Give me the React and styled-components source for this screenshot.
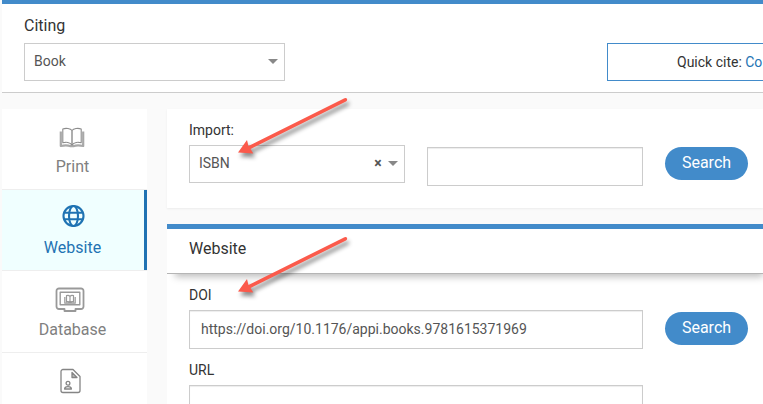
import React, { useState } from "react";
import styled, { createGlobalStyle, ThemeProvider } from "styled-components";

const theme = {
  page: "#fafafa",
  blue: "#428bca",
  active: "#1f73b3",
  activeBg: "#f0ffff",
  border: "#cccccc",
  text: "#333333",
  muted: "#808080",
};

const PrintIcon = () => (
  <Icon width="28" height="24" viewBox="1 -2 28 24" aria-hidden="true">
    <g fill="none" strokeLinejoin="round">
      <path
        stroke="#a8a8a8"
        strokeWidth="2.200"
        d="M2.800 4.500V19c3.500-.8 7.200-.8 9.800.2h2.800c2.600-1 6.300-1 9.800-.2V4.500"
      />
      <path
        fill="#fff"
        stroke="#8c8c8c"
        strokeWidth="1.100"
        d="M14 3.500C12.500 1.500 8 .7 4.800 2v13.800c3-1 7.200-.6 9.200 2.200 2-2.800 6.200-3.200 9.200-2.200V2C20 .7 15.500 1.500 14 3.500z"
      />
      <path stroke="#8c8c8c" strokeWidth="1.400" d="M14 3.500V18" />
    </g>
  </Icon>
);

const WebsiteIcon = () => (
  <Icon width="28" height="24" viewBox="0 0 28 24" aria-hidden="true">
    <g fill="none" stroke="#1f73b3" strokeWidth="2.100">
      <circle cx="14.500" cy="10" r="10" />
      <ellipse cx="14.500" cy="10" rx="4.500" ry="10" />
      <path d="M5.200 6.800h18.600M5.200 13.200h18.600" />
    </g>
  </Icon>
);

const DatabaseIcon = () => (
  <Icon width="30" height="25" viewBox="3 0 30 25" aria-hidden="true">
    <g fill="none" stroke="#999999" strokeWidth="1.800" strokeLinejoin="round">
      <path d="M4 1.500h22A2.500 2.500 0 0 1 28.500 4v15.500A2.500 2.500 0 0 1 26 22h-5.500v2h-11v-2H4a2.500 2.500 0 0 1-2.500-2.500V4A2.500 2.500 0 0 1 4 1.500z" />
      <path strokeWidth="1.400" d="M5.200 5.200h19.600v12.600H5.200z" />
      <path
        strokeWidth="1.200"
        d="M15 9.500c-.8-1.200-2.200-1.400-3.500-.9v6.200c1.300-.4 2.700-.2 3.500 1 .8-1.200 2.200-1.400 3.500-1V8.600c-1.300-.5-2.700-.3-3.500.9zV16M9.800 10v6.200h10.400V10"
      />
    </g>
  </Icon>
);

const PersonalIcon = () => (
  <Icon width="24" height="24" viewBox="3 1 24 24" aria-hidden="true">
    <g fill="none" stroke="#858585" strokeWidth="1.300" strokeLinejoin="round">
      <path d="M5 1.500h10L22 8.500v14a2 2 0 0 1-2 2H5a2 2 0 0 1-2-2v-19a2 2 0 0 1 2-2z" />
      <path fill="#bbbbbb" d="M14 4.500v5h5z" />
      <circle cx="10" cy="15.200" r="1.900" />
      <path d="M6.600 21c0-3.300 6.800-3.300 6.800 0z" />
    </g>
  </Icon>
);

const Arrow = ({ top }) => (
  <ArrowSvg $top={top} viewBox="0 0 118 68" aria-hidden="true">
    <path
      fill="#fb5a4b"
      d="M3 56.500L12 44l1.500 6L109.500 2.200q2-.8 2.500.8.500 1.500-1 2.500L15.500 53l2.800 4.500z"
    />
  </ArrowSvg>
);

const CATEGORIES = [
  { id: "print", label: "Print", icon: PrintIcon },
  { id: "website", label: "Website", icon: WebsiteIcon },
  { id: "database", label: "Database", icon: DatabaseIcon },
  { id: "personal", label: "", icon: PersonalIcon },
];

const App = () => {
  const [category, setCategory] = useState("website");
  const [citing, setCiting] = useState("book");
  const [source, setSource] = useState("isbn");
  const [query, setQuery] = useState("");
  const [doi, setDoi] = useState(
    "https://doi.org/10.1176/appi.books.9781615371969"
  );
  const [url, setUrl] = useState("");

  return (
    <ThemeProvider theme={theme}>
      <GlobalStyle />
      <Page>
        <TopBar>
          <CitingField>
            <CitingLabel htmlFor="citing">Citing</CitingLabel>
            <SelectBox>
              <Select
                id="citing"
                value={citing}
                onChange={(e) => setCiting(e.target.value)}
              >
                <option value="book">Book</option>
              </Select>
            </SelectBox>
          </CitingField>
          <QuickCite>
            Quick cite: <QuickLink href="#quick">Co</QuickLink>
          </QuickCite>
        </TopBar>

        <Content>
          <Sidebar>
            {CATEGORIES.map(({ id, label, icon: CategoryIcon }) => (
              <SidebarItem
                key={id}
                type="button"
                aria-label={label || id}
                $active={category === id}
                onClick={() => setCategory(id)}
              >
                <CategoryIcon />
                {label}
              </SidebarItem>
            ))}
          </Sidebar>

          <Main>
            <ImportPanel>
              <Label htmlFor="source">Import:</Label>
              <FieldRow>
                <SelectBox>
                  <Select
                    id="source"
                    value={source}
                    onChange={(e) => setSource(e.target.value)}
                  >
                    <option value=""></option>
                    <option value="isbn">ISBN</option>
                  </Select>
                  <ClearButton
                    type="button"
                    aria-label="Clear"
                    onClick={() => setSource("")}
                  >
                    ×
                  </ClearButton>
                </SelectBox>
                <Lowered>
                  <Input
                    aria-label="Import query"
                    value={query}
                    onChange={(e) => setQuery(e.target.value)}
                  />
                </Lowered>
                <Lowered>
                  <SearchButton type="button">Search</SearchButton>
                </Lowered>
              </FieldRow>
              <Arrow top={-13} />
            </ImportPanel>

            <FormPanel>
              <PanelTitle>Website</PanelTitle>
              <FormBody>
                <Label htmlFor="doi">DOI</Label>
                <FieldRow>
                  <WideCell>
                    <Input
                      id="doi"
                      value={doi}
                      onChange={(e) => setDoi(e.target.value)}
                    />
                  </WideCell>
                  <Lowered>
                    <SearchButton type="button">Search</SearchButton>
                  </Lowered>
                </FieldRow>
                <Label htmlFor="url">URL</Label>
                <FieldRow>
                  <WideCell>
                    <Input
                      id="url"
                      value={url}
                      onChange={(e) => setUrl(e.target.value)}
                    />
                  </WideCell>
                </FieldRow>
              </FormBody>
              <Arrow top={6} />
            </FormPanel>
          </Main>
        </Content>
      </Page>
    </ThemeProvider>
  );
};

export default App;

const GlobalStyle = createGlobalStyle`
  * {
    box-sizing: border-box;
  }

  body {
    margin: 0;
    background: ${theme.page};
    color: ${theme.text};
    font-family: Roboto, sans-serif;
    font-size: 14px;
    line-height: 20px;
  }

  button, input, select {
    font: inherit;
  }
`;

const Page = styled.div`
  height: 100vh;
  overflow: hidden;
  padding-left: 2px;
`;

const TopBar = styled.header`
  display: flex;
  align-items: flex-end;
  justify-content: space-between;
  padding: 12px 0 11px 22px;
  background: #fff;
  border-top: 4px solid ${({ theme }) => theme.blue};
  border-bottom: 1px solid ${({ theme }) => theme.border};
`;

const CitingField = styled.div`
  width: 261px;
`;

const CitingLabel = styled.label`
  display: block;
  margin-bottom: 7px;
  font-size: 16px;
`;

const SelectBox = styled.div`
  position: relative;

  &::after {
    content: "";
    position: absolute;
    top: 16px;
    right: 7px;
    border: 5px solid transparent;
    border-top-color: #888;
    border-bottom: 0;
    pointer-events: none;
  }
`;

const Select = styled.select`
  display: block;
  width: 100%;
  height: 38px;
  padding: 0 44px 2px 9px;
  appearance: none;
  color: #555;
  background: #fff;
  border: 1px solid ${({ theme }) => theme.border};
  border-radius: 0;
`;

const ClearButton = styled.button`
  position: absolute;
  top: 8px;
  right: 22px;
  padding: 0;
  width: 10px;
  line-height: 20px;
  font-weight: 700;
  color: #555;
  background: none;
  border: 0;
`;

const QuickCite = styled.div`
  width: 156px;
  height: 38px;
  padding: 8px 0 8px 69px;
  overflow: hidden;
  white-space: nowrap;
  border: 1px solid ${({ theme }) => theme.blue};
  border-right: 0;
`;

const QuickLink = styled.a`
  color: ${({ theme }) => theme.active};
  text-decoration: none;
`;

const Content = styled.div`
  display: flex;
  align-items: flex-start;
  gap: 20px;
  padding-top: 16px;
`;

const Sidebar = styled.nav`
  flex: 0 0 145px;
`;

const SidebarItem = styled.button`
  display: flex;
  flex-direction: column;
  align-items: center;
  gap: 6px;
  width: 100%;
  min-height: 81px;
  padding: 16px 4px 10px 0;
  font-size: 16px;
  line-height: 24px;
  color: ${({ theme, $active }) => ($active ? theme.active : theme.muted)};
  background: ${({ theme, $active }) => ($active ? theme.activeBg : "#fff")};
  border: 0;
  border-bottom: 1px solid #eee;
  box-shadow: ${({ theme, $active }) =>
    $active ? `inset -3px 0 0 ${theme.active}` : "none"};
`;

const Icon = styled.svg`
  flex: none;
  overflow: visible;
`;

const Main = styled.main`
  flex: 1;
  min-width: 0;
`;

const ImportPanel = styled.section`
  position: relative;
  padding: 11px 15px 13px 22px;
  background: #fff;
  box-shadow: 0 1px 2px rgba(0, 0, 0, 0.06);
`;

const Label = styled.label`
  display: block;
  margin-bottom: 5px;
`;

const FieldRow = styled.div`
  display: grid;
  grid-template-columns: 1fr 1fr 83px;
  column-gap: 22px;
  min-height: 50px;
`;

const Lowered = styled.div`
  padding-top: 2px;
`;

const WideCell = styled.div`
  grid-column: span 2;
`;

const Input = styled.input`
  display: block;
  width: 100%;
  height: 39px;
  padding: 0 11px 2px;
  color: #555;
  background: #fff;
  border: 1px solid ${({ theme }) => theme.border};
  border-radius: 0;
  box-shadow: inset 0 1px 1px rgba(0, 0, 0, 0.075);
`;

const SearchButton = styled.button`
  display: block;
  width: 100%;
  height: 33px;
  padding: 0 0 2px;
  font-size: 16px;
  color: #fff;
  background: ${({ theme }) => theme.blue};
  border: 0;
  border-radius: 17px;
`;

const FormPanel = styled.section`
  position: relative;
  margin-top: 16px;
  background: #fff;
  border-top: 5px solid ${({ theme }) => theme.blue};
`;

const PanelTitle = styled.h2`
  margin: 0;
  padding: 10px 22px 14px;
  font-size: 16px;
  font-weight: 400;
  line-height: 20px;
  border-bottom: 1px solid #b5b5b5;
  box-shadow: 4px 7px 7px -4px rgba(0, 0, 0, 0.25);
`;

const FormBody = styled.div`
  padding: 11px 15px 20px 22px;
`;

const ArrowSvg = styled.svg`
  position: absolute;
  top: ${({ $top }) => $top}px;
  left: 68px;
  width: 118px;
  height: 68px;
  overflow: visible;
  pointer-events: none;
  filter: drop-shadow(2px 4px 2px rgba(0, 0, 0, 0.45));
`;
